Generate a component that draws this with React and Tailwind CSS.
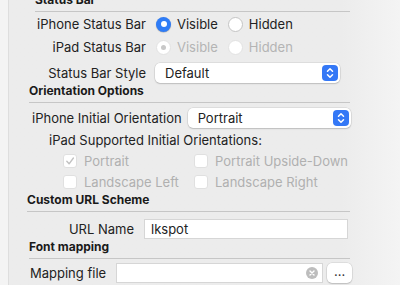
import React from "react";

const font = "font-['Inter','Liberation_Sans',sans-serif]";

const Radio = ({ checked, disabled, label }) => (
  <label className={`flex items-center gap-[6px] ${disabled ? "text-[#b4b4b4]" : "text-[#222]"}`}>
    {checked && !disabled && (
      <span className="w-[15px] h-[15px] rounded-full bg-[#2f7cf6] flex items-center justify-center shadow-[0_0.5px_1px_rgba(0,0,0,0.3)]">
        <span className="w-[6px] h-[6px] rounded-full bg-white" />
      </span>
    )}
    {checked && disabled && (
      <span className="w-[15px] h-[15px] rounded-full bg-white border border-[#e2e2e2] flex items-center justify-center">
        <span className="w-[5px] h-[5px] rounded-full bg-[#c8c8c8]" />
      </span>
    )}
    {!checked && (
      <span className={`w-[15px] h-[15px] rounded-full bg-white border ${disabled ? "border-[#e2e2e2]" : "border-[#c4c4c4]"}`} />
    )}
    <span>{label}</span>
  </label>
);

const Check = ({ checked, label }) => (
  <label className="flex items-center gap-[7px] text-[#b0b0b0] h-[16px]">
    <span className="w-[14px] h-[14px] rounded-[3px] bg-white border border-[#e0e0e0] flex items-center justify-center">
      {checked && (
        <svg width="10" height="10" viewBox="0 0 10 10" fill="none" stroke="#c2c2c2" strokeWidth="1.4" strokeLinecap="round" strokeLinejoin="round">
          <path d="M1.8 5.2l2.3 2.6L8.4 2" />
        </svg>
      )}
    </span>
    <span>{label}</span>
  </label>
);

const Popup = ({ value, className }) => (
  <div className={`h-[20px] bg-white rounded-[5px] shadow-[0_0_0_0.5px_rgba(0,0,0,0.12),0_1px_1.5px_rgba(0,0,0,0.15)] flex items-center pl-[10px] pr-[2px] text-[#222] ${className}`}>
    <span className="flex-1">{value}</span>
    <span className="w-[16px] h-[16px] rounded-[4px] bg-[#3478f6] flex items-center justify-center">
      <svg width="8" height="12" viewBox="0 0 8 12" fill="none" stroke="white" strokeWidth="1.5" strokeLinecap="round" strokeLinejoin="round">
        <path d="M1.5 4.3L4 1.8l2.5 2.5" />
        <path d="M1.5 7.7L4 10.2l2.5-2.5" />
      </svg>
    </span>
  </div>
);

const Header = ({ title, className }) => (
  <div className={className}>
    <div className="text-[12px] font-bold text-[#1a1a1a] leading-[15px]">{title}</div>
    <div className="mt-[4px] mr-[50px] h-px bg-[#c6c6c6]" />
  </div>
);

export default function App() {
  return (
    <div className={`w-[400px] h-[285px] overflow-hidden flex text-[13px] leading-[16px] ${font} bg-[#f3f3f3]`}>
      <div className="w-[9px] bg-[#f4f4f4] border-r border-[#dedede]" />
      <div className="flex-1 bg-gradient-to-r from-[#ececec] via-[#ececec] via-85% to-[#f4f4f4] pl-[20px]">
        <Header title="Status Bar" className="-mt-[8px] ml-[6px]" />

        <div className="flex items-center mt-[2px] h-[20px]">
          <div className="w-[117px] text-right text-[#222]">iPhone Status Bar</div>
          <div className="ml-[10px] flex gap-[10px]">
            <Radio checked label="Visible" />
            <Radio label="Hidden" />
          </div>
        </div>
        <div className="flex items-center mt-[3px] h-[20px]">
          <div className="w-[117px] text-right text-[#222]">iPad Status Bar</div>
          <div className="ml-[10px] flex gap-[10px]">
            <Radio checked disabled label="Visible" />
            <Radio disabled label="Hidden" />
          </div>
        </div>
        <div className="flex items-center mt-[6px] h-[20px]">
          <div className="w-[117px] text-right text-[#222]">Status Bar Style</div>
          <Popup value="Default" className="ml-[9px] w-[185px]" />
        </div>

        <Header title="Orientation Options" />
        <div className="flex items-center mt-[5px] h-[20px]">
          <div className="text-[#222] ml-[3px]">iPhone Initial Orientation</div>
          <Popup value="Portrait" className="ml-[6px] w-[163px]" />
        </div>
        <div className="mt-[4px] ml-[20px] text-[#222]">iPad Supported Initial Orientations:</div>
        <div className="mt-[5px] ml-[34px] grid grid-cols-[131px_1fr] gap-y-[5px]">
          <Check checked label="Portrait" />
          <Check label="Portrait Upside-Down" />
          <Check label="Landscape Left" />
          <Check label="Landscape Right" />
        </div>

        <Header title="Custom URL Scheme" className="mt-[2px] -ml-[2px]" />
        <div className="flex items-center mt-[7px] h-[20px]">
          <div className="w-[105px] text-right text-[#222]">URL Name</div>
          <div className="ml-[10px] w-[204px] h-[20px] bg-white border border-[#d6d6d6] flex items-center px-[6px] text-[#222]">lkspot</div>
        </div>

        <Header title="Font mapping" />
        <div className="flex items-center mt-[4px] h-[20px]">
          <div className="text-[#222] ml-[1px]">Mapping file</div>
          <div className="ml-[10px] w-[207px] h-[20px] bg-white border border-[#d6d6d6] flex items-center justify-end pr-[4px]">
            <span className="w-[12px] h-[12px] rounded-full bg-[#bdbdbd] flex items-center justify-center">
              <svg width="6" height="6" viewBox="0 0 6 6" stroke="white" strokeWidth="1.4" strokeLinecap="round">
                <path d="M1 1l4 4M5 1L1 5" />
              </svg>
            </span>
          </div>
          <div className="ml-[4px] w-[25px] h-[20px] bg-white rounded-[5px] shadow-[0_0_0_0.5px_rgba(0,0,0,0.12),0_1px_1.5px_rgba(0,0,0,0.15)] flex items-center justify-center text-[#333] leading-none pb-[4px]">...</div>
        </div>
      </div>
    </div>
  );
}
